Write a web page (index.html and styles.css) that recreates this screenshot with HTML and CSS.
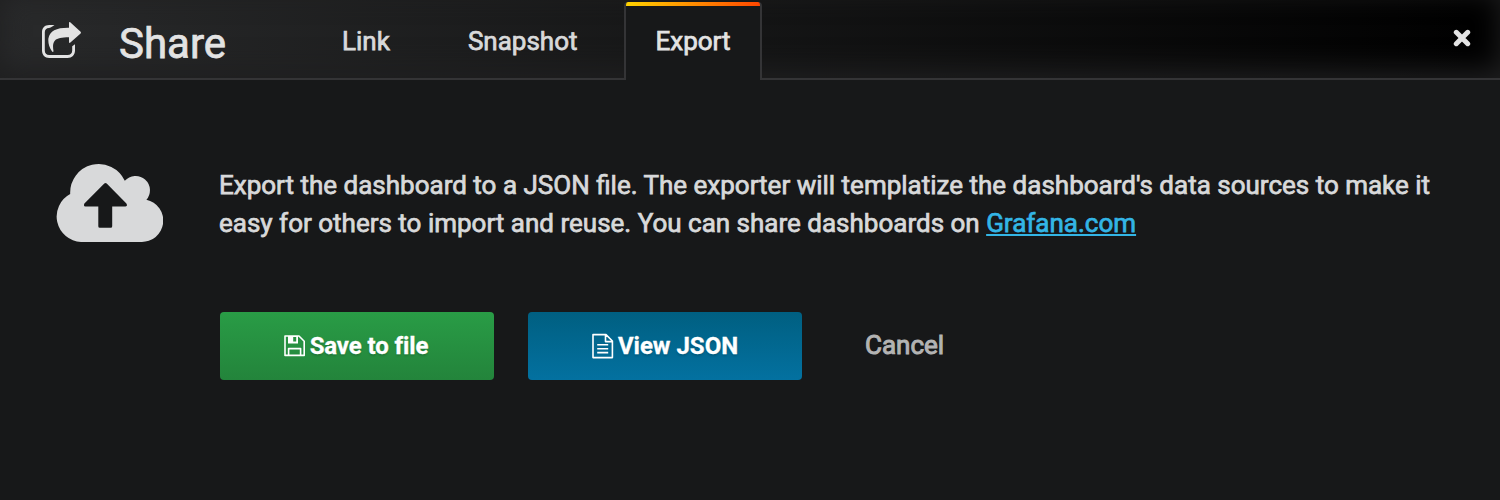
FILE: index.html
```html
<!DOCTYPE html>
<html lang="en">
<head>
<meta charset="utf-8">
<title>Share</title>
<link rel="stylesheet" href="styles.css">
</head>
<body>
<div class="modal">
  <header class="modal-header">
    <svg class="share-icon" viewBox="42 22 40 36" width="40" height="36" aria-hidden="true">
      <path d="M54.5 25C52.4 26.1 51.5 27.9 49 27.9C46.4 27.9 44.8 29.6 44.8 32.3V50.5C44.8 53.4 46.5 55 49.2 55H67.5C70.4 55 72.2 53.4 72.2 50.5V46.2L75 44.3V50.5C75 55 72 58 67.5 58H49.2C44.8 58 42 55 42 50.5V32.3C42 27.8 44.8 25 49.2 25Z"/>
      <path d="M69 22.6Q69.3 21.6 70.2 22.3L80.6 31.8Q81.3 32.6 80.6 33.4L70.4 42.5Q69.3 43.4 69 42.3V37.2C61.5 37.2 57.5 38 55 40.4C52.6 43 52.8 47 53.5 51.2Q53.2 52.7 51.9 51.3C49 46.8 48 42.3 48.4 38.5C49.6 30.6 56.8 27.5 69 27.7Z"/>
    </svg>
    <h2 class="modal-title">Share</h2>
    <nav class="tabs">
      <a class="tab">Link</a>
      <a class="tab">Snapshot</a>
      <a class="tab tab-active">Export</a>
    </nav>
    <svg class="close-icon" viewBox="0 0 18 18" width="18" height="18" aria-hidden="true">
      <path d="M3.3 3.3L14.7 14.7M14.7 3.3L3.3 14.7"/>
    </svg>
  </header>
  <main class="content">
    <svg class="cloud-icon" viewBox="56 163 108 80" width="108" height="80" aria-hidden="true">
      <path fill-rule="evenodd" d="M82 242A25.5 25.5 0 0 1 71.2 194A28.6 28.6 0 0 1 125.8 180.8A14.3 14.3 0 0 1 147.4 199.7A21.4 21.4 0 0 1 142 242ZM105.3 183.6L85.4 203.6Q84.1 206.6 86.5 206.6H99.3V226.3Q99.3 227.8 100.8 227.8H111.7Q113.2 227.8 113.2 226.3V206.6H126.5Q128.9 206.2 127.4 203.6L107.7 183.6Q106.5 182.4 105.3 183.6Z"/>
    </svg>
    <div class="body">
      <p class="description">Export the dashboard to a JSON file. The exporter will templatize the dashboard's data sources to make it<br>easy for others to import and reuse. You can share dashboards on <a class="link">Grafana.com</a></p>
      <div class="actions">
        <button class="btn btn-save">
          <svg class="btn-icon" viewBox="0 0 22 22" width="22" height="22" aria-hidden="true">
            <path d="M1 1H15L20.2 6.2V20.4H1Z"/>
            <path d="M4.6 20V13.6H16.6V20"/>
            <path class="solid" d="M4 1H14V8.6H4ZM9.2 2V6.6H12.2V2Z" fill-rule="evenodd"/>
          </svg>
          <span>Save to file</span>
        </button>
        <button class="btn btn-view">
          <svg class="btn-icon" viewBox="0 0 22 26" width="22" height="26" aria-hidden="true">
            <path d="M1 1.6H14L20.4 8V24.6H1ZM13.5 1.6V8.6H20.4M5.2 11.8H16.2M5.2 15.8H16.2M5.2 19.6H16.2"/>
          </svg>
          <span>View JSON</span>
        </button>
        <a class="cancel">Cancel</a>
      </div>
    </div>
  </main>
</div>
</body>
</html>
```
FILE: styles.css
```css
* { box-sizing: border-box; }
body {
  margin: 0;
  background: #171819;
  color: #d8d9da;
  font-family: Roboto, sans-serif;
  font-size: 26px;
  -webkit-text-stroke: 0.75px currentColor;
}
.modal { height: 500px; overflow: hidden; background: #171819; }
.modal-header {
  display: flex;
  align-items: flex-start;
  height: 80px;
  padding-left: 42px;
  padding-right: 29px;
  border-bottom: 2px solid #343436;
  background: linear-gradient(90deg, #292a2b, #000);
  box-shadow: inset 0 -8px 28px #1f1f20;
}
.share-icon { margin-top: 22px; fill: #e3e3e3; flex: none; }
.modal-title {
  width: 190px;
  margin: 19px 0 0 37px;
  font-size: 42px;
  line-height: 50px;
  font-weight: 400;
  color: #e3e3e3;
}
.tabs { display: flex; height: 80px; padding-top: 2px; }
.tab {
  height: 78px;
  padding: 23px 31px 0;
  margin-right: 16px;
  line-height: 32px;
}
.tab:first-child { padding-left: 33px; }
.tab-active {
  width: 138px;
  padding: 23px 0 0 30px;
  margin: 0 0 0 -1px;
  border: 2px solid #343436;
  border-width: 0 2px;
  border-radius: 4px 4px 0 0;
  color: #e3e3e3;
  background: linear-gradient(90deg, #ffd500, #ff4400) top / 100% 4px no-repeat border-box, #171819;
}
.close-icon { margin: 28.5px 0 0 auto; flex: none; }
.close-icon path { fill: none; stroke: #e3e3e3; stroke-width: 5; stroke-linecap: round; }
.content { display: flex; padding: 83px 55px 0; }
.cloud-icon { flex: none; fill: #d8d9da; }
.body { margin-left: 56px; }
.description { margin: 3px 0 0; line-height: 38px; white-space: nowrap; }
.link { color: #33b5e5; text-decoration: underline; }
.actions { display: flex; align-items: center; margin-top: 70px; margin-left: 1px; gap: 34px; }
.btn {
  display: flex;
  align-items: center;
  justify-content: center;
  gap: 4px;
  width: 274px;
  height: 68px;
  padding: 0 2px 1px 0;
  border: 0;
  border-radius: 4px;
  color: #fff;
  font: 700 24px Roboto, sans-serif;
  -webkit-text-stroke: 0.3px #fff;
  text-shadow: 0 2px 2px rgba(0, 0, 0, .15);
}
.btn-save { letter-spacing: -0.1px; background: linear-gradient(#299c46, #23843b); }
.btn-view { padding-right: 0; background: linear-gradient(#005f81, #0371a0); }
.btn-icon { fill: none; stroke: #fff; stroke-width: 1.6; stroke-linejoin: round; }
.btn-icon .solid { fill: #fff; stroke: none; }
.cancel { margin-left: 29px; padding-bottom: 2px; color: #b3b3b3; -webkit-text-stroke-width: 1px; }
```
